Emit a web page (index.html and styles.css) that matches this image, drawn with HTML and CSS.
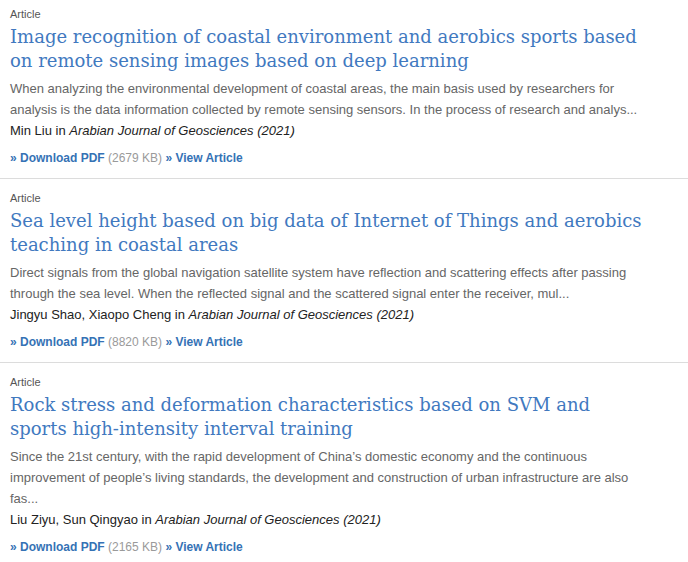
FILE: index.html
```html
<!DOCTYPE html>
<html lang="en">
<head>
<meta charset="utf-8">
<title>Articles</title>
<link rel="stylesheet" href="styles.css">
</head>
<body>
<ul class="results">
  <li class="result">
    <div class="type">Article</div>
    <h2 class="title"><a href="#">Image recognition of coastal environment and aerobics sports based on remote sensing images based on deep learning</a></h2>
    <p class="desc">When analyzing the environmental development of coastal areas, the main basis used by researchers for analysis is the data information collected by remote sensing sensors. In the process of research and analys...</p>
    <p class="meta">Min Liu in <em>Arabian Journal of Geosciences (2021)</em></p>
    <p class="links"><a href="#">» Download PDF</a> <span class="size">(2679 KB)</span> <a href="#">» View Article</a></p>
  </li>
  <li class="result">
    <div class="type">Article</div>
    <h2 class="title"><a href="#">Sea level height based on big data of Internet of Things and aerobics teaching in coastal areas</a></h2>
    <p class="desc">Direct signals from the global navigation satellite system have reflection and scattering effects after passing through the sea level. When the reflected signal and the scattered signal enter the receiver, mul...</p>
    <p class="meta">Jingyu Shao, Xiaopo Cheng in <em>Arabian Journal of Geosciences (2021)</em></p>
    <p class="links"><a href="#">» Download PDF</a> <span class="size">(8820 KB)</span> <a href="#">» View Article</a></p>
  </li>
  <li class="result">
    <div class="type">Article</div>
    <h2 class="title"><a href="#">Rock stress and deformation characteristics based on SVM and sports high-intensity interval training</a></h2>
    <p class="desc">Since the 21st century, with the rapid development of China’s domestic economy and the continuous improvement of people’s living standards, the development and construction of urban infrastructure are also fas...</p>
    <p class="meta">Liu Ziyu, Sun Qingyao in <em>Arabian Journal of Geosciences (2021)</em></p>
    <p class="links"><a href="#">» Download PDF</a> <span class="size">(2165 KB)</span> <a href="#">» View Article</a></p>
  </li>
</ul>
</body>
</html>
```
FILE: styles.css
```css
html, body {
  margin: 0;
  padding: 0;
  background: #fff;
}
body {
  font-family: "Liberation Sans", Arial, sans-serif;
  color: #222;
}
.results {
  list-style: none;
  margin: 0;
  padding: 0;
}
.result {
  padding: 12px 38px 10px 10px;
  border-bottom: 1px solid #dcdcdc;
}
.result:first-child {
  padding-top: 7px;
}
.type {
  font-size: 11px;
  line-height: 14px;
  color: #555;
}
.title {
  margin: 4px 0 5px;
  font-family: "DejaVu Serif", Georgia, serif;
  font-weight: normal;
  font-size: 18px;
  line-height: 24px;
}
.title a {
  color: #4179bf;
  text-decoration: none;
}
.desc {
  margin: 0;
  font-size: 13px;
  line-height: 21px;
  color: #666;
}
.meta {
  margin: 0;
  font-size: 13px;
  line-height: 21px;
  color: #222;
}
.links {
  margin: 7px 0 0;
  font-size: 12px;
  line-height: 20px;
  color: #999;
}
.links a {
  color: #3572b5;
  font-weight: bold;
  text-decoration: none;
}
.size {
  color: #9a9a9a;
  font-weight: normal;
}
```
